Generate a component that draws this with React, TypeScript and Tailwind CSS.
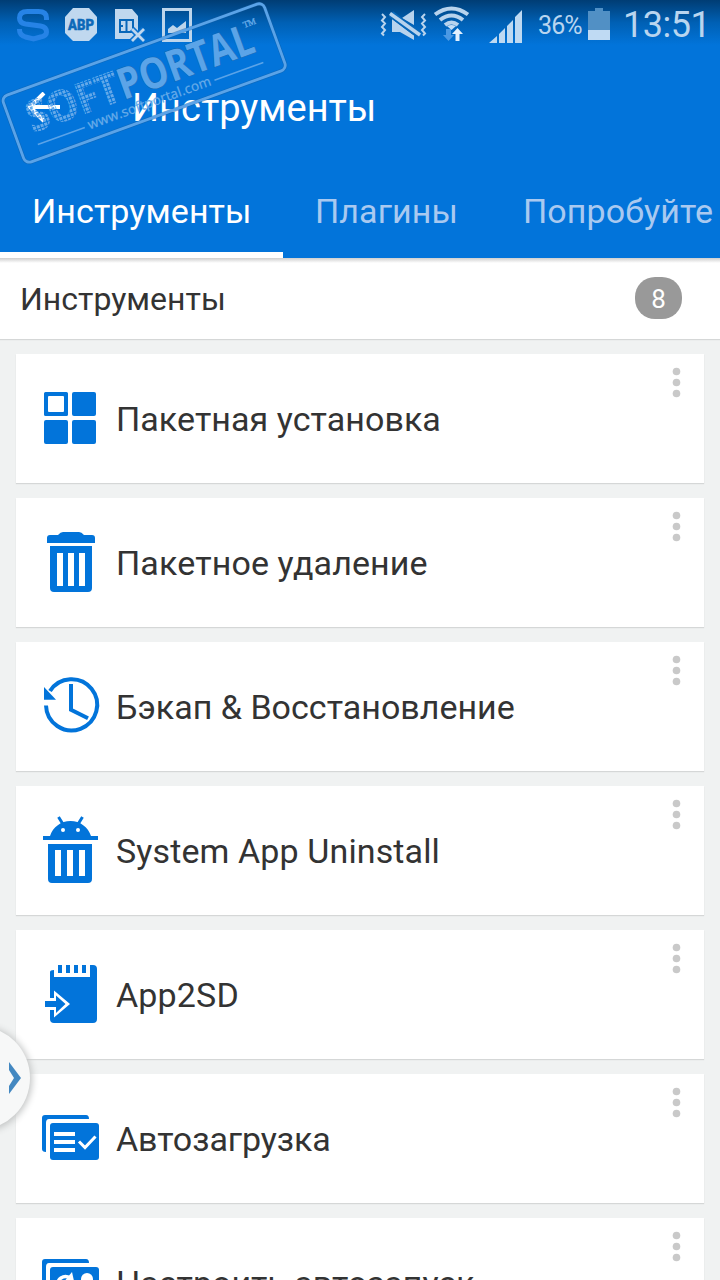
import type { ReactNode } from "react";

const BLUE = "#0274da";

function GridIcon() {
  return (
    <svg width="100" height="80" viewBox="0 0 100 80" fill={BLUE}>
      <path fillRule="evenodd" d="M15.500 12h21a1.500 1.500 0 0 1 1.500 1.500v21a1.500 1.500 0 0 1-1.500 1.500h-21a1.500 1.500 0 0 1-1.500-1.500v-21a1.500 1.500 0 0 1 1.500-1.500zm3.500 4a1 1 0 0 0-1 1v14a1 1 0 0 0 1 1h14a1 1 0 0 0 1-1V17a1 1 0 0 0-1-1z" />
      <rect x="42" y="12" width="24" height="24" rx="2" />
      <rect x="14" y="40" width="24" height="24" rx="2" />
      <rect x="42" y="40" width="24" height="24" rx="2" />
    </svg>
  );
}

function TrashIcon() {
  return (
    <svg width="100" height="80" viewBox="0 0 100 80" fill={BLUE}>
      <path d="M17 23v-5q0-3 3-3h8q2.500-3 5-3h16q2.500 0 5 3h8q3 0 3 3v5z" />
      <path fillRule="evenodd" d="M20 26h42v42q0 4-4 4H24q-4 0-4-4zM27 33v33h6V33zm11 0v33h6V33zm11 0v33h6V33z" />
    </svg>
  );
}

function HistoryIcon() {
  return (
    <svg width="100" height="80" viewBox="0 0 100 80" fill="none" stroke={BLUE}>
      <path d="M16 40.500A25.600 25.600 0 1 0 20 26" strokeWidth="4" />
      <path d="M14 22l12 12.800H14z" fill={BLUE} stroke="none" />
      <path d="M41 19v25.700l17 8.600" strokeWidth="4" />
    </svg>
  );
}

function AndroidTrashIcon() {
  return (
    <svg width="100" height="90" viewBox="0 0 100 90" fill={BLUE}>
      <path d="M13 35v-4h7C23 22 31 16 40.500 16S58 22 61 31h7v4z" />
      <path d="M28.500 12l5 8M52.500 12l-5 8" stroke={BLUE} strokeWidth="3" />
      <circle cx="33" cy="25" r="2" fill="white" />
      <circle cx="48" cy="25" r="2" fill="white" />
      <path fillRule="evenodd" d="M18 39h44v35q0 4-4 4H22q-4 0-4-4zM25 45v26h6V45zm12 0v26h6V45zm12 0v26h6V45z" />
    </svg>
  );
}

function CardArrowIcon() {
  return (
    <svg width="100" height="85" viewBox="0 0 100 85" fill={BLUE}>
      <path d="M20 22q0-2 4-2v7h36V15h3q4 0 4 4v50q0 4-4 4H24q-4 0-4-4z" />
      <path d="M28 15h4v8h-4zm8 0h4v8h-4zm8 0h4v8h-4zm8 0h4v8h-4z" />
      <path d="M15 48h9v-7.500L40 54 24 67.500V60h-9z" fill="white" />
      <path d="M15 51h11v-5.500l9.500 8.500-9.500 9V57H15z" />
    </svg>
  );
}

function ListCheckIcon() {
  return (
    <svg width="100" height="80" viewBox="0 0 100 80" fill={BLUE}>
      <path d="M12 52V18q0-3 3-3h41q3 0 3 4H19q-3 0-3 4v29q-4 0-4-3z" />
      <rect x="20" y="23" width="49" height="37" rx="3" />
      <path d="M24 32h21v4H24zm0 8h21v4H24zm0 8h21v4H24z" fill="white" />
      <path d="M49 41.500l6 6 10.500-11" fill="none" stroke="white" strokeWidth="3" />
    </svg>
  );
}

function RestartCardIcon() {
  return (
    <svg width="100" height="80" viewBox="0 0 100 80" fill={BLUE}>
      <path d="M12 52V18q0-3 3-3h41q3 0 3 4H19q-3 0-3 4v29q-4 0-4-3z" />
      <rect x="20" y="23" width="49" height="37" rx="3" />
      <path d="M27.500 43c-1-8 6-13 13-9" fill="none" stroke="white" strokeWidth="3.500" />
      <path d="M42 28l2 9-9-.5z" fill="white" />
      <circle cx="57" cy="35" r="6" fill="white" />
    </svg>
  );
}

type Item = { label: string; icon: ReactNode; iconTop: string; spacing: string };

const items: Item[] = [
  { label: "Пакетная установка", icon: <GridIcon />, iconTop: "mt-[26px]", spacing: "tracking-[0.06px]" },
  { label: "Пакетное удаление", icon: <TrashIcon />, iconTop: "mt-[22px]", spacing: "tracking-[0.12px]" },
  { label: "Бэкап & Восстановление", icon: <HistoryIcon />, iconTop: "mt-[23px]", spacing: "tracking-[0.02px]" },
  { label: "System App Uninstall", icon: <AndroidTrashIcon />, iconTop: "mt-[19px]", spacing: "tracking-[0.12px]" },
  { label: "App2SD", icon: <CardArrowIcon />, iconTop: "mt-[20px]", spacing: "tracking-[0.15px]" },
  { label: "Автозагрузка", icon: <ListCheckIcon />, iconTop: "mt-[26px]", spacing: "tracking-[-0.07px]" },
  { label: "Настроить автозапуск", icon: <RestartCardIcon />, iconTop: "mt-[26px]", spacing: "tracking-[0px]" },
];

function ToolCard({ item }: { item: Item }) {
  return (
    <div className="flex h-[129px] shrink-0 bg-white pl-[14px] shadow-[0_1px_1px_#d5d7d7]">
      <div className={`w-[86px] shrink-0 ${item.iconTop}`}>
        <div className="w-[100px]">{item.icon}</div>
      </div>
      <div className={`flex-1 pt-[43px] text-[34px] leading-[44px] whitespace-nowrap text-[#333] ${item.spacing}`}>{item.label}</div>
      <svg className="mt-[13px] mr-[23px]" width="9" height="32" viewBox="0 0 9 32" fill="#c9c9c9">
        <circle cx="4.500" cy="4.500" r="3.800" />
        <circle cx="4.500" cy="15.500" r="3.800" />
        <circle cx="4.500" cy="26.500" r="3.800" />
      </svg>
    </div>
  );
}

function NoticeIcons() {
  return (
    <svg width="200" height="50" viewBox="0 0 200 50">
      <path d="M46.500 20v-2q0-6.500-8-6.500h-11q-8 0-8 6.500 0 5 6 6l15 2q6 1 6 6 0 4-6 5l-7 2-8-2q-6-2-6-7v-1" fill="none" stroke="#2683e6" strokeWidth="5" />
      <path d="M73 8h16l8 9v16l-8 8H73l-8-8V17z" fill="#c0d8ef" />
      <text x="68" y="30" fill="#0d69b9" stroke="#0d69b9" strokeWidth=".5" fontFamily="Roboto, sans-serif" fontWeight="900" fontSize="15" textLength="26" lengthAdjust="spacingAndGlyphs">ABP</text>
      <path d="M115 9h17l6 7v23h-23z" fill="#bfd7ee" />
      <path d="M120 20h13M120 26h3M120 32h13M120 19v14M126.500 19v14M133 19v14" stroke="#0867b9" strokeWidth="2" />
      <path d="M132 29l12 12M144 29l-12 12" stroke="#0871cf" strokeWidth="6" />
      <path d="M132 29l12 12M144 29l-12 12" stroke="#bfd7ee" strokeWidth="2.800" />
      <path fillRule="evenodd" d="M162 8h30v34h-30zm3 3v28h24V11z" fill="#bcd5ec" />
      <path d="M168 33v-4l5-4 4 3 9-7v12z" fill="#bcd5ec" />
    </svg>
  );
}

function SystemIcons() {
  return (
    <svg width="145" height="50" viewBox="380 0 145 50">
      <g fill="none" stroke="#b8d3ed" strokeWidth="2">
        <path d="M382 14l3 3-3 3.500 3 3-3 3.500 3 3-3 3.500 2 2M425 14l-3 3 3 3.500-3 3 3 3.500-3 3 3 3.500-2 2" />
      </g>
      <path d="M392 19l20 15 2 1v5l-14-8h-8zM402 18l12-8v15z" fill="#b8d3ed" />
      <path d="M391 14l28 21" stroke="#0867b9" strokeWidth="7" />
      <path d="M390 13.500l30 21.500" stroke="#b8d3ed" strokeWidth="3.500" />
      <g fill="none" stroke="#b8d3ed" strokeWidth="4">
        <path d="M435 14.500q16.500-12 33 0M440 20q11.500-9 23 0M445 25q6.500-5 13 0" />
      </g>
      <path d="M447 26q4.500-2 9 0l-4.500 4z" fill="#c5def6" />
      <path d="M446 29h5v6h3l-5.500 6-5.500-6h3z" fill="#4a99e4" />
      <path d="M457.500 28l5.500 6h-3.500v7h-4v-7H452z" fill="#e2f0fe" />
      <path d="M489 43l8-7v7zM499 34l6-6v15h-6zM507 26l6-6v23h-6zM515 17l7-7v33h-7z" fill="#bed9f2" />
    </svg>
  );
}

function StatusBar() {
  return (
    <div className="flex h-[50px] items-start bg-linear-to-b from-[#003d74] via-[#0060b4] via-45% to-[#0274da] to-90% text-[#b9d5ef]">
      <NoticeIcons />
      <div className="w-[180px]" />
      <SystemIcons />
      <div className="w-[63px] pt-[9px] pl-[13px] text-[25px] leading-[34px] tracking-[-0.9px] whitespace-nowrap">36%</div>
      <svg width="22" height="50" viewBox="0 0 22 50">
        <path d="M0 11h7V8h8v3h7v19H0z" fill="#5190c5" />
        <path d="M0 30h22v10H0z" fill="#bfdaf3" />
      </svg>
      <div className="pt-[3px] pl-[13px] text-[36px] leading-[44px] tracking-[-0.5px]">13:51</div>
    </div>
  );
}

function Watermark() {
  return (
    <svg className="absolute top-0 left-0" width="300" height="170" viewBox="0 0 300 170">
      <defs>
        <pattern id="dots" width="4" height="4" patternUnits="userSpaceOnUse">
          <rect width="3" height="3" fill="#65a9e9" />
        </pattern>
      </defs>
      <g transform="translate(144 82.500) rotate(-20)">
        <rect x="-139" y="-35" width="278" height="71" rx="6" fill="none" stroke="#175b9b" strokeWidth="4" opacity=".5" />
        <rect x="-139" y="-35" width="278" height="71" rx="6" fill="none" stroke="#5aa3e8" strokeWidth="2.800" />
        <g fontFamily="'Open Sans', sans-serif" fontSize="43" fontWeight="700">
          <text x="-122" y="9" fill="url(#dots)" stroke="url(#dots)" strokeWidth=".8" textLength="97" lengthAdjust="spacingAndGlyphs">SOFT</text>
          <text x="-25" y="9.500" fill="#5ba4e8" stroke="#1c65a8" strokeWidth=".8" paintOrder="stroke" textLength="142" lengthAdjust="spacingAndGlyphs">PORTAL</text>
        </g>
        <text x="-67" y="25.500" fill="#69ace9" stroke="#69ace9" strokeWidth=".25" fontFamily="'Open Sans', sans-serif" fontSize="13.500" textLength="130" lengthAdjust="spacing">www.softportal.com</text>
        <text x="113" y="-17" fill="#69ace9" stroke="#69ace9" strokeWidth=".3" fontFamily="'Liberation Serif', serif" fontSize="9" textLength="13">TM</text>
        <path d="M-121 22h50M67 22h52" stroke="#5aa3e8" strokeWidth="1.500" />
      </g>
    </svg>
  );
}

export default function App() {
  return (
    <div className="relative flex h-[1280px] w-[720px] flex-col overflow-hidden bg-[#f0f2f2] font-[Roboto,'Noto_Sans',sans-serif]">
      <header className="flex h-[258px] shrink-0 flex-col bg-[#0274da]">
        <StatusBar />
        <div className="flex h-[114px] items-center pt-[1px] pl-[27px] text-white">
          <svg width="34" height="32" viewBox="0 0 34 32" fill="none" stroke="white" strokeWidth="4">
            <path d="M17 1L3 15l14 14M3 15h30" />
          </svg>
          <h1 className="pl-[71px] text-[38px] leading-[48px]">Инструменты</h1>
        </div>
        <nav className="flex h-[94px] shrink-0 text-[34px] leading-[94px] tracking-[0.08px] whitespace-nowrap text-[#a9c9f0]">
          <span className="w-[283px] shrink-0 border-b-[6px] border-white pl-[32px] text-white">Инструменты</span>
          <span className="w-[208px] shrink-0 pl-[32px]">Плагины</span>
          <span className="shrink-0 pl-[32px]">Попробуйте</span>
        </nav>
      </header>
      <section className="flex h-[81px] shrink-0 items-center justify-between bg-white bg-linear-to-b from-[#cfcfcf] to-white to-[5px] pr-[38px] pl-[20px] shadow-[0_1px_1px_#d5d7d7]">
        <h2 className="text-[32px] leading-[40px] text-[#333]">Инструменты</h2>
        <span className="mb-[2px] h-[42px] w-[47px] rounded-[20px] bg-[#999] text-center text-[26px] leading-[44px] text-white">8</span>
      </section>
      <main className="flex flex-col gap-[15px] px-[16px] pt-[15px]">
        {items.map((item) => (
          <ToolCard key={item.label} item={item} />
        ))}
      </main>
      <button aria-label="›" className="absolute top-[1026px] left-[-74px] size-[104px] rounded-full bg-[#f7f8f8] shadow-[1px_1px_7px_1px_#c2c4c4]">
        <svg className="absolute top-[36px] left-[83px]" width="14" height="32" viewBox="0 0 14 32">
          <path d="M0 0v8l5 8-5 8v8l12-16z" fill="#4388c1" />
        </svg>
      </button>
      <Watermark />
    </div>
  );
}
